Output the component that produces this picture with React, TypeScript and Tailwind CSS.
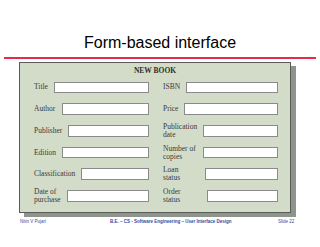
import React from "react";

type Row = { label: string[]; w: number };

const left: Row[] = [
  { label: ["Title"], w: 95 },
  { label: ["Author"], w: 87 },
  { label: ["Publisher"], w: 81 },
  { label: ["Edition"], w: 87 },
  { label: ["Classification"], w: 68 },
  { label: ["Date of", "purchase"], w: 82 },
];

const right: Row[] = [
  { label: ["ISBN"], w: 92 },
  { label: ["Price"], w: 94 },
  { label: ["Publication", "date"], w: 75 },
  { label: ["Number of", "copies"], w: 75 },
  { label: ["Loan", "status"], w: 73 },
  { label: ["Order", "status"], w: 71 },
];

function FormRow({ row }: { row: Row }) {
  return (
    <div className="flex h-[21.7px] items-center justify-between">
      <div className="text-[7.5px] leading-[8px] text-[#3a3a3a]">
        {row.label.map((l) => (
          <div key={l} className="whitespace-nowrap">
            {l}
          </div>
        ))}
      </div>
      <div
        className="h-[11.5px] border border-[#8a8a8a] bg-white"
        style={{ width: row.w }}
      />
    </div>
  );
}

export default function App() {
  return (
    <div className="relative h-[247px] w-[320px] overflow-hidden bg-white">
      <div
        className="pt-[34px] text-center text-[16px] leading-[18px] text-black"
        style={{ fontFamily: '"Liberation Sans", Arial, sans-serif' }}
      >
        Form-based interface
      </div>
      <div className="mx-[4px] mt-[5px] h-[2px] bg-[#e8294a]" />
      <div
        className="ml-[19px] mt-[3px] h-[151px] w-[272px] border border-[#5a5a5a] bg-[#d3dcc9] shadow-[5px_4px_0_#8d948b]"
        style={{ fontFamily: '"Liberation Serif", "Times New Roman", serif' }}
      >
        <div className="pt-[4px] text-center text-[7.5px] font-bold leading-[8px] text-[#2e2e2e]">
          NEW BOOK
        </div>
        <div className="mt-[1.65px] grid grid-cols-2 gap-x-[14px] pl-[14px] pr-[12px]">
          <div className="flex flex-col">
            {left.map((r) => (
              <FormRow key={r.label.join()} row={r} />
            ))}
          </div>
          <div className="flex flex-col">
            {right.map((r) => (
              <FormRow key={r.label.join()} row={r} />
            ))}
          </div>
        </div>
      </div>
      <div
        className="ml-[20px] mt-[6px] flex text-[4.5px] leading-[5px] text-[#3a4ba0]"
        style={{ fontFamily: '"Liberation Sans", Arial, sans-serif' }}
      >
        <div className="w-[90px]">Nitin V Pujari</div>
        <div className="w-[110px] whitespace-nowrap text-center font-bold">
          B.E. – CS - Software Engineering – User Interface Design
        </div>
        <div className="ml-[58px]">Slide 22</div>
      </div>
    </div>
  );
}
